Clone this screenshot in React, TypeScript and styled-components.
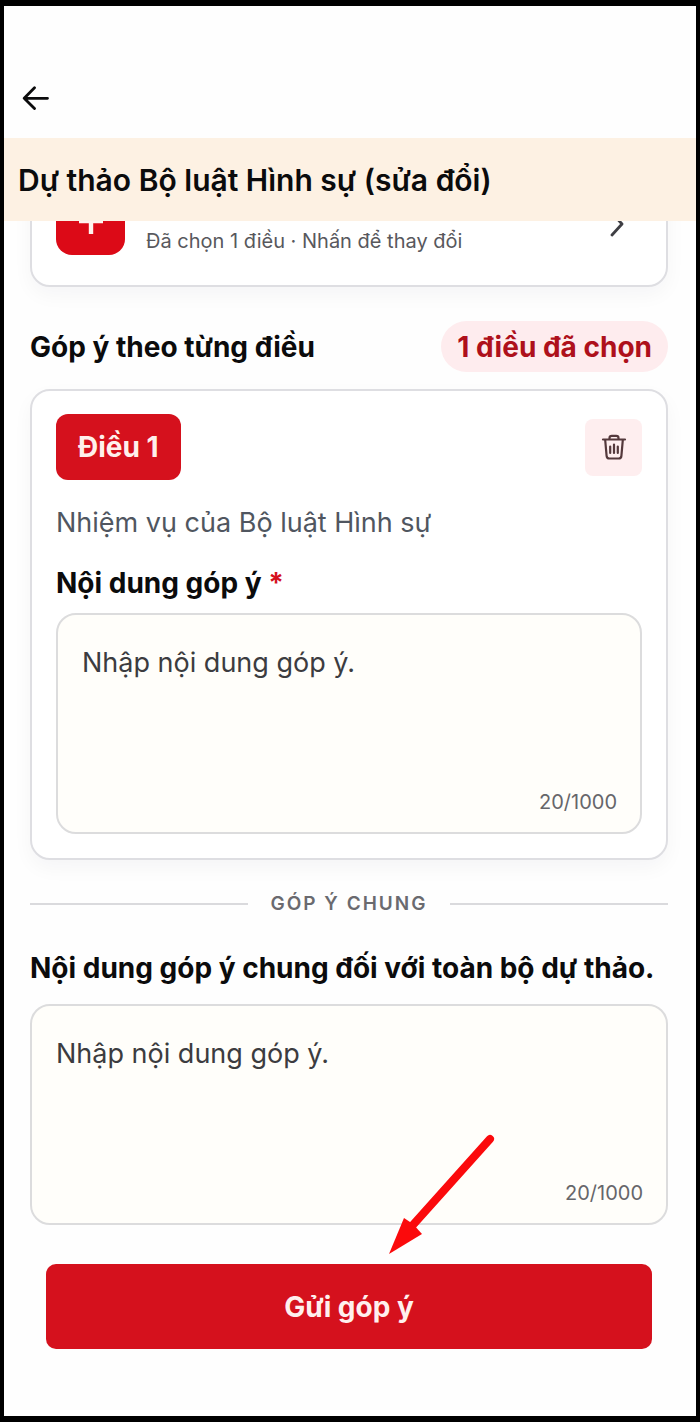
import React, { useState } from "react";
import styled, { createGlobalStyle } from "styled-components";

const GlobalStyle = createGlobalStyle`
  *, *::before, *::after { box-sizing: border-box; }
  body {
    margin: 0;
    background: #000;
    color: #0b0b0c;
    font-family: Inter, "Noto Sans", sans-serif;
  }
  button, textarea { font: inherit; }
`;

const Screen = styled.div`
  display: flex;
  flex-direction: column;
  min-height: 100vh;
  border: solid #000;
  border-width: 6px 4px;
  background: #fefefe;
`;

const TopBar = styled.header`
  display: flex;
  align-items: flex-end;
  height: 132px;
  padding: 0 12px 20px;
`;

const BackButton = styled.button`
  display: grid;
  place-items: center;
  width: 40px;
  height: 40px;
  padding: 0;
  border: 0;
  background: none;
  color: #0b0b0c;
`;

const Banner = styled.div`
  padding: 20px 14px 19px;
  background: #fdf1e3;
`;

const Title = styled.h1`
  margin: 0;
  font-size: 30px;
  line-height: 44px;
  font-weight: 600;
`;

const Content = styled.main`
  flex: 1;
  padding: 0 28px 0 26px;
  overflow: hidden;
`;

const Card = styled.section`
  border: 2px solid #dedee2;
  border-radius: 20px;
  background: #fff;
  box-shadow: 0 8px 20px rgba(20, 20, 40, 0.04);
`;

const PickerCard = styled(Card)`
  display: flex;
  align-items: center;
  gap: 21px;
  margin-top: -67px;
  padding: 30px 36px 30px 24px;
`;

const PickerIcon = styled.span`
  display: grid;
  place-items: center;
  width: 69px;
  height: 69px;
  border-radius: 16px;
  background: #dc0a17;
`;

const PickerHint = styled.span`
  flex: 1;
  align-self: flex-end;
  font-size: 20px;
  line-height: 28px;
  color: #58585d;
`;

const SectionHead = styled.div`
  display: flex;
  align-items: center;
  justify-content: space-between;
  margin: 34px 0 17px;
`;

const Heading = styled.h2`
  margin: 0;
  font-size: 28px;
  line-height: 40px;
  font-weight: 700;
`;

const CountPill = styled.span`
  padding: 6px 16px 5px;
  border-radius: 26px;
  background: #feecee;
  color: #ae101b;
  font-size: 28px;
  line-height: 40px;
  font-weight: 700;
`;

const ArticleCard = styled(Card)`
  padding: 23px 24px 24px;
`;

const ArticleHead = styled.div`
  display: flex;
  align-items: center;
  justify-content: space-between;
`;

const ArticleTag = styled.span`
  padding: 13px 22px;
  border-radius: 12px;
  background: #d5111d;
  color: #fff0ec;
  font-size: 28px;
  line-height: 40px;
  font-weight: 700;
`;

const DeleteButton = styled.button`
  display: grid;
  place-items: center;
  width: 57px;
  height: 57px;
  padding: 0;
  border: 0;
  border-radius: 8px;
  background: #feeeef;
  color: #54393c;
`;

const ArticleName = styled.p`
  margin: 23px 0 20px;
  font-size: 27px;
  line-height: 40px;
  color: #505660;
`;

const Label = styled.label<{ $gap: number }>`
  display: block;
  margin-bottom: ${(p) => p.$gap}px;
  font-size: 28px;
  line-height: 40px;
  font-weight: 700;
`;

const Required = styled.span`
  color: #d5111d;
`;

const Field = styled.div`
  display: flex;
  flex-direction: column;
  padding: 28px 23px 16px 24px;
  border: 2px solid #dcdcdd;
  border-radius: 20px;
  background: #fffefa;
`;

const TextArea = styled.textarea`
  width: 100%;
  height: 145px;
  padding: 0;
  border: 0;
  outline: 0;
  resize: none;
  background: transparent;
  color: #3c3c3f;
  font-size: 27px;
  line-height: 40px;
`;

const Counter = styled.span`
  align-self: flex-end;
  font-size: 20px;
  line-height: 28px;
  color: #66666a;
`;

const Divider = styled.div`
  display: flex;
  align-items: center;
  gap: 22px;
  margin: 29px 0;
  color: #6a6a6f;
  font-size: 19px;
  line-height: 30px;
  font-weight: 600;
  letter-spacing: 2px;
  &::before, &::after {
    content: "";
    flex: 1;
    height: 2px;
    background: #dadadd;
  }
`;

const SubmitArea = styled.div`
  position: relative;
  padding: 39px 16px 0;
`;

const SubmitButton = styled.button`
  display: block;
  width: 100%;
  padding: 23px 0 22px;
  border: 0;
  border-radius: 10px;
  background: #d5111d;
  color: #fff0ee;
  font-size: 28px;
  line-height: 40px;
  font-weight: 700;
`;

const Pointer = styled.svg`
  position: absolute;
  top: -95px;
  left: 56%;
  pointer-events: none;
`;

const MAX = 1000;

function CommentField({ id }: { id: string }) {
  const [text, setText] = useState("Nhập nội dung góp ý.");
  return (
    <Field>
      <TextArea
        id={id}
        value={text}
        maxLength={MAX}
        spellCheck={false}
        onChange={(e) => setText(e.target.value)}
      />
      <Counter>{`${text.length}/${MAX}`}</Counter>
    </Field>
  );
}

export default function App() {
  return (
    <>
      <GlobalStyle />
      <Screen>
        <TopBar>
          <BackButton type="button" aria-label="Quay lại">
            <svg width="28" height="24" viewBox="0 0 28 24" fill="none" stroke="currentColor" strokeWidth="2.8" strokeLinecap="round" strokeLinejoin="round">
              <path d="M25.5 12.3H2.2M12.5 1.8L2.2 12.3L12.5 22.6" />
            </svg>
          </BackButton>
        </TopBar>
        <Banner>
          <Title>Dự thảo Bộ luật Hình sự (sửa đổi)</Title>
        </Banner>
        <Content>
          <PickerCard>
            <PickerIcon>
              <svg width="28" height="28" viewBox="0 0 28 28" stroke="#fff3ee" strokeWidth="4.4">
                <path d="M14 1V27M2 14H26" />
              </svg>
            </PickerIcon>
            <PickerHint>Đã chọn 1 điều · Nhấn để thay đổi</PickerHint>
            <svg width="24" height="34" viewBox="0 0 24 34" fill="none" stroke="#3f3f44" strokeWidth="2.8" strokeLinecap="round" strokeLinejoin="round">
              <path d="M6 9L16 20L6 31" />
            </svg>
          </PickerCard>

          <SectionHead>
            <Heading>Góp ý theo từng điều</Heading>
            <CountPill>1 điều đã chọn</CountPill>
          </SectionHead>

          <ArticleCard>
            <ArticleHead>
              <ArticleTag>Điều 1</ArticleTag>
              <DeleteButton type="button" aria-label="Xóa điều 1">
                <svg width="26" height="28" viewBox="0 0 26 28" fill="none" stroke="currentColor" strokeWidth="2.2" strokeLinecap="round" strokeLinejoin="round">
                  <path d="M2 6.5H24M8.5 6V5Q8.5 2.8 10.8 2.8H15.2Q17.5 2.8 17.5 5V6M4.2 7L5.6 22.8Q5.8 25.5 8.4 25.5H17.6Q20.2 25.5 20.4 22.8L21.8 7" />
                  <path d="M9.2 13.5V20M13 11.5V20M16.8 13.5V20" />
                </svg>
              </DeleteButton>
            </ArticleHead>
            <ArticleName>Nhiệm vụ của Bộ luật Hình sự</ArticleName>
            <Label htmlFor="article-comment" $gap={10}>
              Nội dung góp ý <Required>*</Required>
            </Label>
            <CommentField id="article-comment" />
          </ArticleCard>

          <Divider>GÓP Ý CHUNG</Divider>

          <Label htmlFor="general-comment" $gap={16}>
            Nội dung góp ý chung đối với toàn bộ dự thảo.
          </Label>
          <CommentField id="general-comment" />

          <SubmitArea>
            <SubmitButton type="button">Gửi góp ý</SubmitButton>
            <Pointer width="112" height="126" viewBox="0 0 112 126" aria-hidden="true">
              <path d="M103 9L25 96" stroke="#fb0a0c" strokeWidth="8" strokeLinecap="round" />
              <path d="M2 124L17 88L26 94L35 104Z" fill="#fb0a0c" />
            </Pointer>
          </SubmitArea>
        </Content>
      </Screen>
    </>
  );
}
